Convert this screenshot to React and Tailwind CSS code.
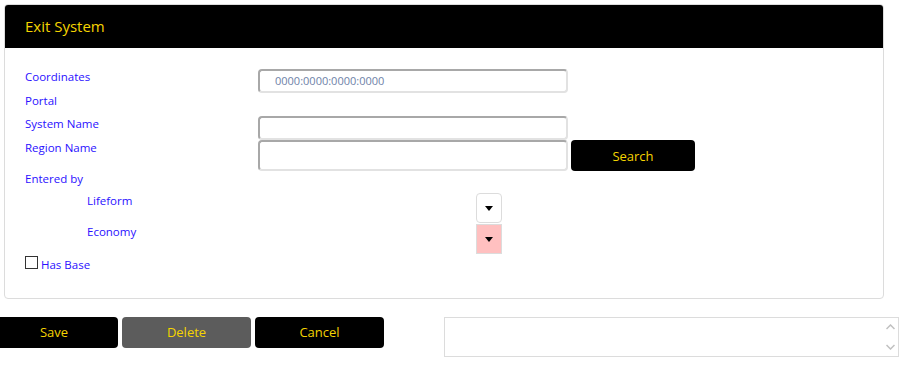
import { useState } from "react";

const font = { fontFamily: '"Open Sans", "Noto Sans", sans-serif' };

function Caret() {
  return (
    <svg width="8" height="5" viewBox="0 0 8 5">
      <path d="M0 0h8L4 5z" fill="#000" />
    </svg>
  );
}

const inputCls =
  "w-[310px] border-2 border-[#a8a8a8] border-b-[#e2e2e2] border-r-[#e2e2e2] rounded-[4px] bg-white";

export default function App() {
  const [hasBase, setHasBase] = useState(false);

  return (
    <div className="w-[903px] h-[365px] bg-white overflow-hidden" style={font}>
      <div className="pt-1 pl-1 w-[884px]">
        <div className="border border-[#dcdcdc] rounded-[4px] overflow-hidden">
          <div className="bg-black h-[43px] flex items-center pl-5 text-[15px] text-[#f5d400]">
            Exit System
          </div>

          <div className="pl-5 pt-[21px] pb-[26px] text-[11.5px] leading-[16px] text-[#2a10ff]">
            <div className="flex items-start h-[24px]">
              <span className="w-[233px]">Coordinates</span>
              <div className={`${inputCls} h-[24px] flex items-center pl-[15px] text-[11px] text-[#6e82a8]`}>
                0000:0000:0000:0000
              </div>
            </div>
            <div className="h-[23px]">Portal</div>
            <div className="flex items-start h-[24px]">
              <span className="w-[233px]">System Name</span>
              <div className={`${inputCls} h-[24px]`} />
            </div>
            <div className="flex items-start h-[31px]">
              <span className="w-[233px]">Region Name</span>
              <div className={`${inputCls} h-[31px]`} />
              <button className="ml-[3px] w-[124px] h-[31px] bg-black rounded-[4px] text-[13px] text-[#f5d400]">
                Search
              </button>
            </div>
            <div className="h-[16px]">Entered by</div>
            <div className="flex items-start h-[31px] mt-[6px]">
              <span className="pl-[62px] w-[451px]">Lifeform</span>
              <div className="w-[26px] h-[30px] border border-[#dcdcdc] rounded-[4px] bg-white flex items-center justify-center">
                <Caret />
              </div>
            </div>
            <div className="flex items-start h-[32px]">
              <span className="pl-[62px] w-[451px]">Economy</span>
              <div className="w-[26px] h-[30px] border border-[#dcdcdc] bg-[#ffc0c0] flex items-center justify-center">
                <Caret />
              </div>
            </div>
            <label className="flex items-start h-[16px]">
              <input
                type="checkbox"
                checked={hasBase}
                onChange={(e) => setHasBase(e.target.checked)}
                className="appearance-none w-[13px] h-[13px] border border-[#333] bg-white mr-[3px]"
              />
              <span className="pt-[1px]">Has Base</span>
            </label>
          </div>
        </div>
      </div>

      <div className="flex items-start mt-[18px]">
        <div className="flex gap-[4px] -ml-[10px]">
          <button className="w-[128px] h-[31px] bg-black rounded-[4px] text-[13px] text-[#f5d400]">
            Save
          </button>
          <button className="w-[129px] h-[31px] bg-[#5c5c5c] rounded-[4px] text-[13px] text-[#f5d400]">
            Delete
          </button>
          <button className="w-[129px] h-[31px] bg-black rounded-[4px] text-[13px] text-[#f5d400]">
            Cancel
          </button>
        </div>
        <div className="ml-[60px] w-[455px] h-[40px] border border-[#dcdcdc] bg-white flex justify-end">
          <div className="w-[16px] flex flex-col items-center justify-between py-[6px]">
            <svg width="9" height="6" viewBox="0 0 9 6">
              <path d="M0.5 5L4.5 1l4 4" stroke="#c0c0c0" strokeWidth="1.5" fill="none" />
            </svg>
            <svg width="9" height="6" viewBox="0 0 9 6">
              <path d="M0.5 1L4.5 5l4-4" stroke="#c0c0c0" strokeWidth="1.5" fill="none" />
            </svg>
          </div>
        </div>
      </div>
    </div>
  );
}
